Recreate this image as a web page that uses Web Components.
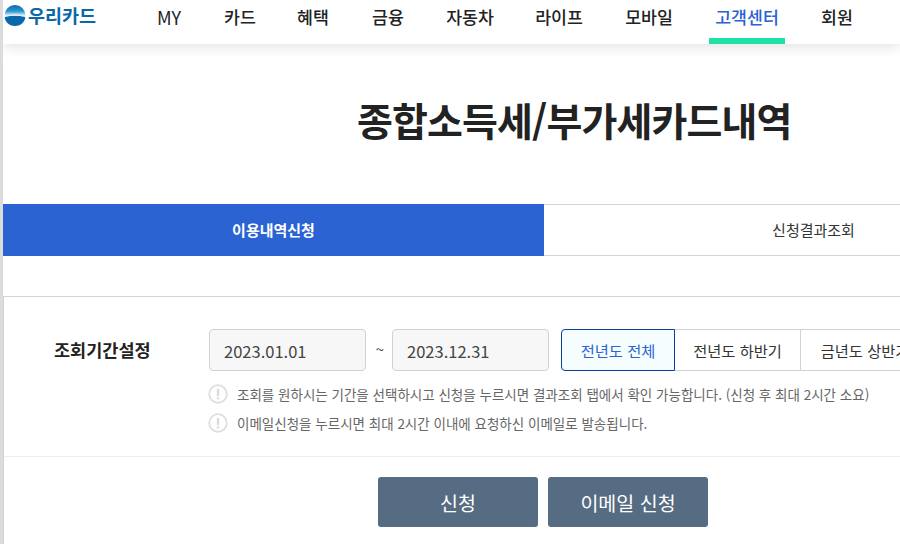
<!DOCTYPE html>
<html lang="ko"><head><meta charset="utf-8"><title>종합소득세/부가세카드내역</title>
<style>
html,body{margin:0;padding:0;background:#fff;overflow:hidden;width:900px;height:544px}
body{font-family:"Noto Sans CJK KR","Noto Sans",sans-serif;color:#222}
</style></head><body>
<wc-page>
<wc-header></wc-header>
<wc-title>종합소득세/부가세카드내역</wc-title>
<wc-tabs></wc-tabs>
<wc-panel></wc-panel>
</wc-page>
<script>
function def(name,html,build){customElements.define(name,class extends HTMLElement{constructor(){super();this.attachShadow({mode:"open"}).innerHTML=html;}});}
const F='"Noto Sans CJK KR","Noto Sans",sans-serif';
def("wc-page",`<style>:host{display:block;width:900px;height:544px;box-sizing:border-box;border-left:3px solid #dcdcdc;overflow:hidden;position:relative}</style><slot></slot>`);
def("wc-header",`<style>
:host{display:flex;height:44px;align-items:flex-start;background:#fff;box-shadow:0 2px 14px rgba(0,0,0,.13);position:relative;font-family:${F}}
.logo{display:flex;align-items:center;gap:2px;height:30px;color:#0a68a8;font-size:18.5px;font-weight:700;line-height:29px;flex:none;white-space:nowrap;margin-left:1px}
svg{display:block;flex:none}
a{position:absolute;top:0;height:44px;box-sizing:border-box;padding-top:5px;font-size:17.3px;line-height:24px;font-weight:500;color:#222;white-space:nowrap;transform:translateX(-50%)}
a.my{font-weight:400;font-size:18px;left:166px}
a.on{color:#2b63d2;width:76px;text-align:center;border-bottom:6px solid #1fe0a5}
</style>
<div class="logo"><svg width="22" height="21" viewBox="0 0 22 21"><defs><linearGradient id="g" x1="0" y1="0" x2="0" y2="1"><stop offset="0" stop-color="#0a68a8"/><stop offset=".3" stop-color="#2f97d3"/><stop offset=".5" stop-color="#d8f3ff"/></linearGradient></defs><circle cx="11" cy="10.500" r="10.500" fill="url(#g)"/><path d="M.6 12.500C5 9.500 17 9.500 21.400 12.500 20.500 17.500 16 21 11 21S1.500 17.500.6 12.500Z" fill="#0a68a8"/><path d="M1.500 12C6 8.500 16 8.500 20.500 12 15 10.300 7 10.300 1.500 12Z" fill="#fff"/></svg><span>우리카드</span></div>
<a class="my">MY</a><a style="left:237px">카드</a><a style="left:310px">혜택</a><a style="left:385px">금융</a><a style="left:467px">자동차</a><a style="left:556px">라이프</a><a style="left:646px">모바일</a><a class="on" style="left:744px">고객센터</a><a style="left:834px">회원</a>`);
def("wc-title",`<style>:host{display:block;height:160px;box-sizing:border-box;padding:49px 0 0 354px;font:700 39px/52px ${F};letter-spacing:-.87px;color:#222;white-space:nowrap}</style><slot></slot>`);
def("wc-tabs",`<style>
:host{display:flex;height:52px;width:1081px;font-family:${F};font-size:15px;font-weight:500}
div{display:flex;align-items:center;justify-content:center;box-sizing:border-box;flex:none}
.a{width:541px;background:#2b63d2;color:#fff;font-weight:700;padding-bottom:1px}
.b{width:540px;border:1px solid #d4d4d4;border-left:0;color:#333;font-weight:400;padding-bottom:1px}
</style><div class="a">이용내역신청</div><div class="b">신청결과조회</div>`);
def("wc-date",`<style>:host{display:block;width:157px;height:42px;box-sizing:border-box;border:1px solid #d2d2d2;border-radius:4px;background:#f7f7f7;padding-left:14px;font:400 16.5px/42px ${F};color:#444}</style><slot></slot>`);
def("wc-note",`<style>:host{display:flex;align-items:center;gap:9px;height:29.500px;font:400 13.5px/18px ${F};color:#666;white-space:nowrap}
svg{flex:none;display:block}</style><svg width="20" height="20" viewBox="0 0 20 20"><circle cx="10" cy="10" r="8.800" fill="#fff" stroke="#dedede" stroke-width="1.800"/><rect x="8.800" y="5" width="2.400" height="7" fill="#dadada"/><rect x="8.800" y="13.200" width="2.400" height="2.200" fill="#dadada"/></svg><span><slot></slot></span>`);
def("wc-panel",`<style>
:host{display:block;margin-top:40px;width:1000px;height:300px;box-sizing:border-box;border:1px solid #d4d4d4;border-right:0;font-family:${F}}
.row{display:flex;height:160px;border-bottom:1px solid #eee;box-sizing:border-box;padding:32px 0 0 50px;width:897px}
.lab{width:155px;font-size:17.5px;font-weight:700;line-height:42px;color:#222;flex:none;white-space:nowrap}
.main{flex:none}
.dates{display:flex;align-items:center;height:42px}
.til{width:28px;margin-right:-2px;text-align:center;font-size:15px;line-height:20px;color:#444;padding-bottom:2px}
.seg{display:flex;margin-left:12px;height:42px;font-size:15.3px;color:#333;text-align:center;white-space:nowrap}
.seg div{box-sizing:border-box;border:1px solid #d2d2d2;border-left:0;flex:none}
.seg .on{width:114px;border:1px solid #0b3f9e;border-radius:4px 0 0 4px;background:#f6fdff;color:#2b63d2;line-height:40px}
.seg .b{width:126px;line-height:40px}.seg .c{width:128px;line-height:40px;border-right:0}
.notes{margin-top:8px;margin-left:-1px}
.btns{display:flex;gap:10px;padding:20px 0 0 374px}
button{width:160px;height:50px;border:0;border-radius:3px;background:#566c82;color:#fff;font:400 19.500px ${F};padding:0}
</style>
<div class="row"><div class="lab">조회기간설정</div><div class="main">
<div class="dates"><wc-date>2023.01.01</wc-date><span class="til">~</span><wc-date>2023.12.31</wc-date>
<div class="seg"><div class="on">전년도 전체</div><div class="b">전년도 하반기</div><div class="c">금년도 상반기</div></div></div>
<div class="notes"><wc-note>조회를 원하시는 기간을 선택하시고 신청을 누르시면 결과조회 탭에서 확인 가능합니다. (신청 후 최대 2시간 소요)</wc-note><wc-note>이메일신청을 누르시면 최대 2시간 이내에 요청하신 이메일로 발송됩니다.</wc-note></div>
</div></div>
<div class="btns"><button>신청</button><button>이메일 신청</button></div>`);
</script></body></html>
